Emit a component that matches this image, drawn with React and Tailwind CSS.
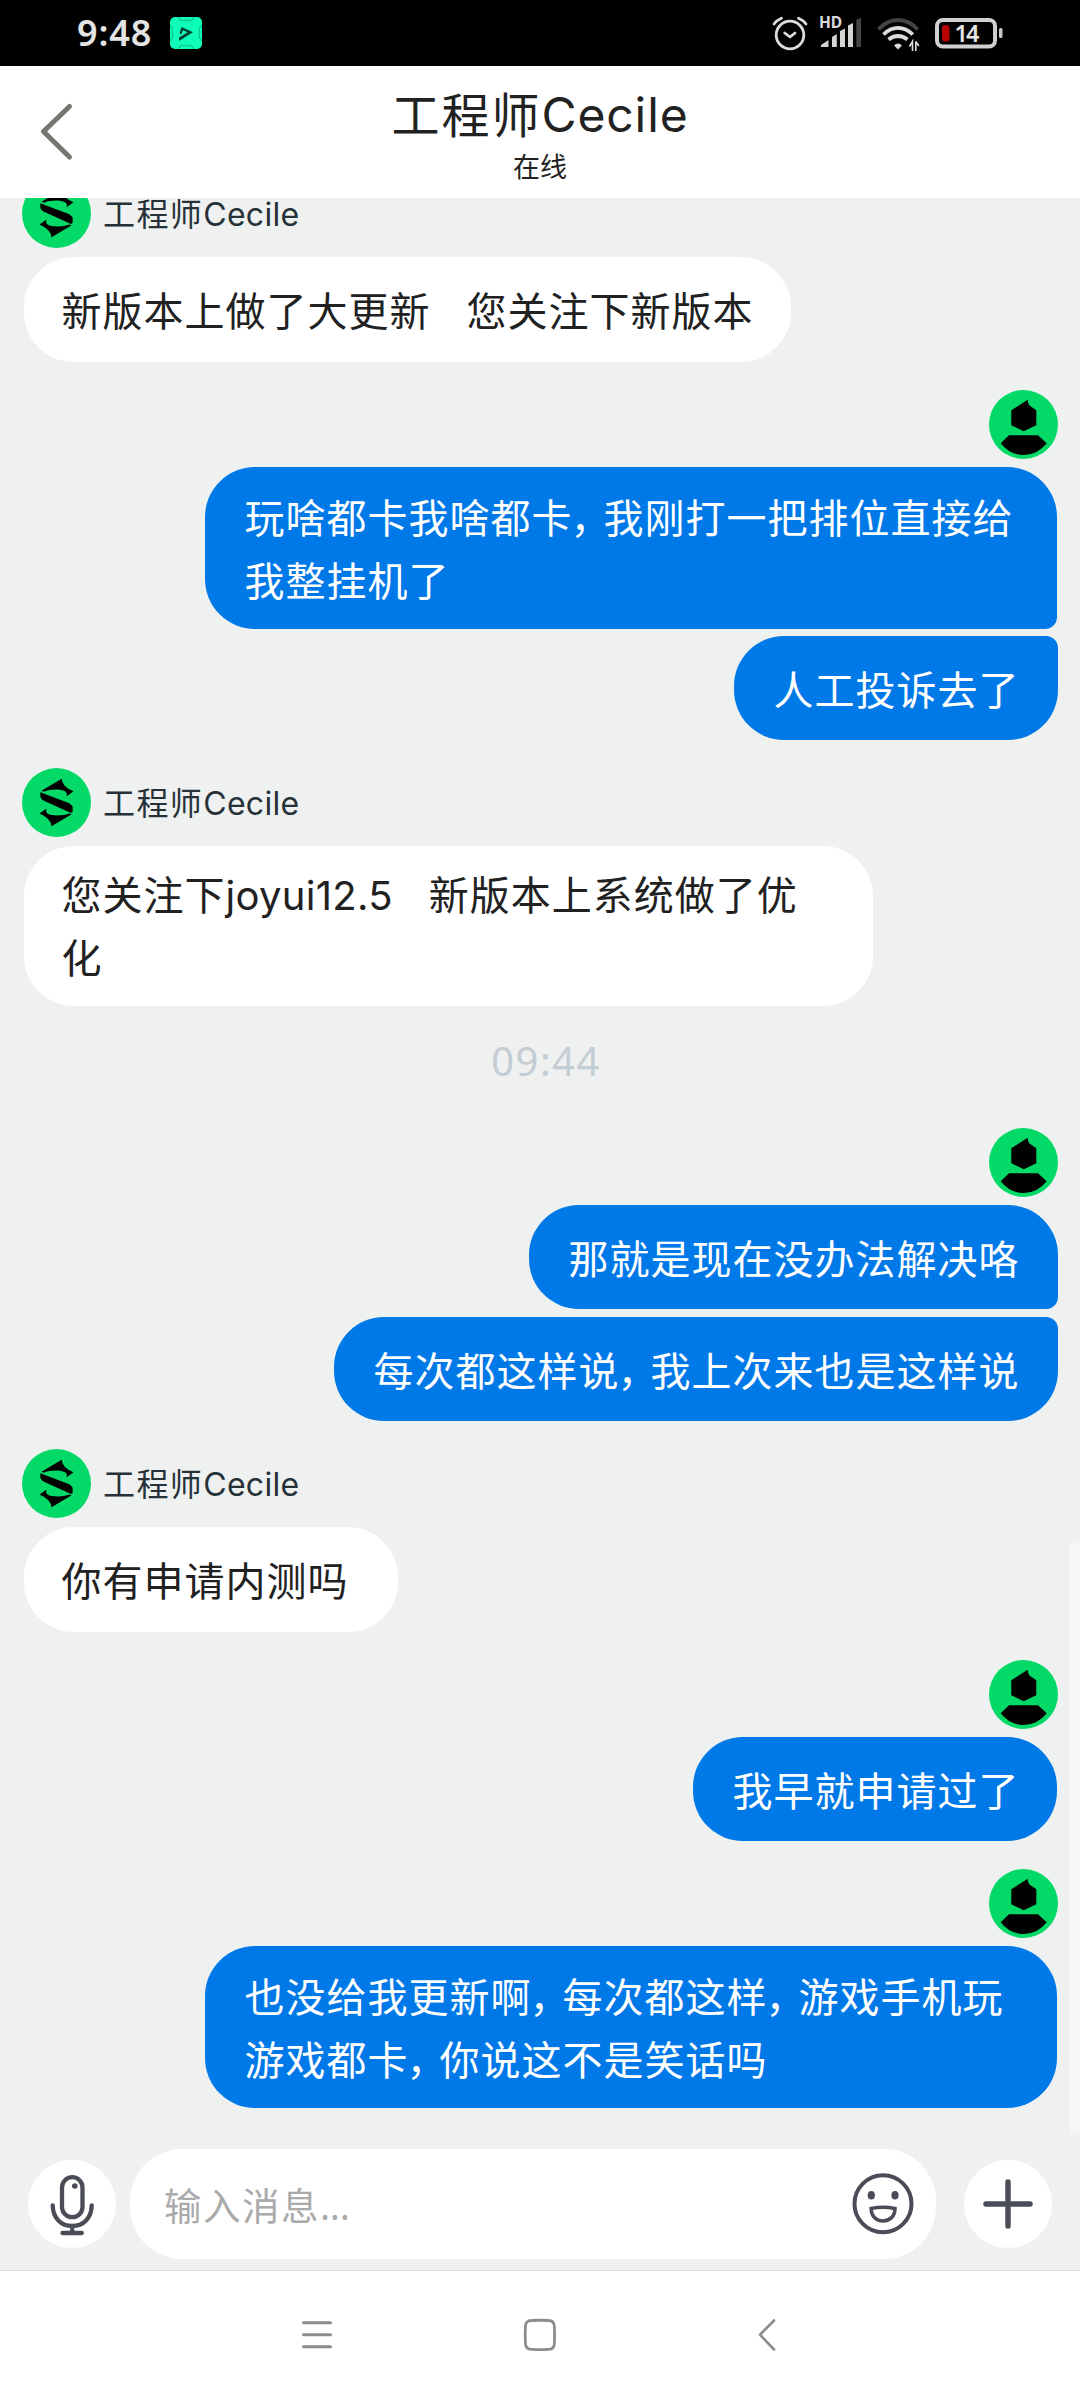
import React from "react";

const messages = [
  {
    from: "agent",
    bubbles: [{ lines: ["新版本上做了大更新   您关注下新版本"], box: "w-[767px] h-[105px] rounded-[50px]" }],
  },
  {
    from: "me",
    bubbles: [
      {
        lines: ["玩啥都卡我啥都卡，我刚打一把排位直接给", "我整挂机了"],
        box: "w-[852px] h-[162px] rounded-[50px] rounded-br-[12px] mr-px",
      },
      { lines: ["人工投诉去了"], box: "w-[324px] h-[104px] rounded-[50px] rounded-tr-[12px] mt-[7px]" },
    ],
  },
  {
    from: "agent",
    bubbles: [
      {
        lines: ["您关注下joyui12.5   新版本上系统做了优", "化"],
        box: "w-[849px] h-[160px] rounded-[50px] pb-0.5",
      },
    ],
  },
  { time: "09:44" },
  {
    from: "me",
    bubbles: [
      { lines: ["那就是现在没办法解决咯"], box: "w-[529px] h-[104px] rounded-[50px] rounded-br-[12px]" },
      {
        lines: ["每次都这样说，我上次来也是这样说"],
        box: "w-[724px] h-[104px] rounded-[50px] rounded-tr-[12px] mt-2",
      },
    ],
  },
  {
    from: "agent",
    bubbles: [{ lines: ["你有申请内测吗"], box: "w-[374px] h-[105px] rounded-[50px]" }],
  },
  {
    from: "me",
    bubbles: [{ lines: ["我早就申请过了"], box: "w-[364px] h-[104px] rounded-[50px] mr-px" }],
  },
  {
    from: "me",
    bubbles: [
      {
        lines: ["也没给我更新啊，每次都这样，游戏手机玩", "游戏都卡，你说这不是笑话吗"],
        box: "w-[852px] h-[162px] rounded-[50px] mr-px",
      },
    ],
  },
];

// Las comas van más estrechas y el texto latino con su propia fuente
function RichText({ text }) {
  return text.split(/(，|[A-Za-z0-9.]+| {3})/).map((part, i) => {
    if (part === "，") {
      return <span key={i} className="-ml-[2px] tracking-[-7px]">，</span>;
    }
    if (part === "   ") {
      return <span key={i} className="inline-block w-[36px]"> </span>;
    }
    if (/^[A-Za-z0-9.]+$/.test(part)) {
      return (
        <span key={i} className="font-['Inter',sans-serif] leading-none tracking-[0.3px]">{part}</span>
      );
    }
    return <span key={i}>{part}</span>;
  });
}

function AgentAvatar() {
  return (
    <svg className="size-[69px] shrink-0" viewBox="0 0 69 69">
      <circle cx="34.5" cy="34.5" r="34.5" fill="#03d967" />
      <path d="M39.7 10.7 19.5 22.7 22 23.7C27 21 39 20.500 43.500 23.500Q45.500 25 44.700 28.200L51.500 23.300Q40 18.500 39.700 10.700Z" />
      <path d="M18.300 24.300 47.300 35.300Q50.700 37.500 50.700 40V43.800L49 45 22 32.800Q18.300 30.800 18.300 28Z" />
      <path d="M29.5 58.3 49.700 46.300 47.200 45.500C42 48 30 48.300 25.500 45.500Q23.500 44 24.300 40.800L17.500 45.500Q29 50.500 29.500 58.300Z" />
    </svg>
  );
}

function UserAvatar() {
  return (
    <svg className="size-[69px] shrink-0" viewBox="0 0 69 69">
      <circle cx="34.5" cy="34.5" r="34.5" fill="#03d967" />
      <path d="M38.7 9.7Q38.500 13 40.500 15.500L47.300 20.300V35.300L34.700 41.300 22.300 35.300V20.300Z" />
      <path d="M20 45.300H49L57.700 53.300Q48.500 65 34.700 65T11.700 53.300Z" />
    </svg>
  );
}

function StatusBar() {
  return (
    <div className="flex h-[66px] shrink-0 items-center bg-black text-[#dcdcdc]">
      <span className="ml-[77px] w-[93px] font-['Noto_Sans',sans-serif] text-[36px] leading-none font-semibold tracking-[0.9px] text-[#e4e4e4]">
        9:48
      </span>
      <svg className="h-8 w-8" viewBox="0 0 32 32">
        <rect width="32" height="32" rx="5" fill="#0fffba" />
        <path d="M8 0 11 3.500H21L24 0M8 32 11 28.500H21L24 32M0 8 2.500 11V21L0 24M32 8 29.500 11V21L32 24" fill="none" stroke="#0bc994" strokeWidth="1.500" />
        <path d="M9.500 17 11.500 10 23 15.200 9 24V20.500L17.500 15.200 13 13.200 11.500 17Z" fill="#06402f" />
      </svg>
      <svg className="ml-auto h-[66px] w-[240px] shrink-0" viewBox="770 0 240 66">
        {/* alarma */}
        <g fill="none" stroke="#dcdcdc" strokeWidth="2.800" strokeLinecap="round">
          <circle cx="790" cy="35" r="13.800" />
          <path d="M784.700 33 790 37 795 33M774 24Q777 20 781.500 18.200M806 24Q803 20 798.500 18.200" strokeLinejoin="round" />
        </g>
        {/* cobertura */}
        <text x="819" y="28" fill="#dcdcdc" fontSize="15.500" fontWeight="700" fontFamily="Noto Sans, sans-serif" textLength="23">HD</text>
        <path d="M821 47V45L828.500 40V47ZM832 47V37L836.800 34V47ZM840 47V31L845 28.500V47ZM848 47V25.500L853 23V47Z" fill="#d4d4d4" />
        <path d="M856.300 47V20L861 17.800V47Z" fill="#444" />
        {/* wifi */}
        <g fill="none" strokeWidth="3.800">
          <path d="M878.500 29.500Q887 20 898 20T917.800 29.500" stroke="#444" />
          <path d="M883.500 34.500Q890 27.900 898 27.900T912.800 34.500M888.500 39.500Q893 36 898 36T907.500 39.500" stroke="#dcdcdc" />
        </g>
        <path d="M894 45.500Q898 41.500 902 45.500L898 49.500Z" fill="#dcdcdc" />
        <path d="M912.500 51V41.500L909.500 46.500M915.800 51V41.500M915.800 41.500 918.800 46" fill="none" stroke="#dcdcdc" strokeWidth="1.600" />
        {/* batería */}
        <rect x="937" y="20" width="58" height="26.500" rx="6" fill="none" stroke="#d0d0d0" strokeWidth="4" />
        <rect x="942" y="25" width="7.500" height="16.500" rx="3" fill="#b90000" />
        <text x="954.500" y="42" fill="#e4e4e4" fontSize="23.500" fontWeight="600" fontFamily="Noto Sans, sans-serif" textLength="25">14</text>
        <rect x="999" y="28" width="3.500" height="10" rx="1.500" fill="#c8c8c8" />
      </svg>
      <div className="w-[70px]" />
    </div>
  );
}

function Header() {
  return (
    <header className="grid h-[132px] shrink-0 grid-cols-[120px_1fr_120px] bg-white text-[#222]">
      <svg className="mt-[34px] ml-[38px] h-16 w-10" viewBox="0 0 40 64" fill="none" stroke="#757571" strokeWidth="5" strokeLinecap="round" strokeLinejoin="round">
        <path d="M31.500 6.500 5.500 31.500 31.500 57" />
      </svg>
      <div className="flex flex-col items-center">
        <h1 className="mt-[15px] flex h-[62px] items-center text-[48px] leading-[62px] tracking-[2px]">
          工程师
          <span className="mt-[5px] font-['Inter',sans-serif] leading-none tracking-[0.9px]">Cecile</span>
        </h1>
        <p className="mt-[7px] text-[27px] leading-8">在线</p>
      </div>
    </header>
  );
}

function MessageGroup({ from, bubbles }) {
  if (from === "agent") {
    return (
      <div className="flex flex-col items-start pl-[22px]">
        <div className="mb-[9px] flex items-center gap-3">
          <AgentAvatar />
          <span className="mb-[3px] text-[32px] leading-[40px] tracking-[1.4px] text-[#263238]">
            工程师
            <span className="font-['Inter',sans-serif] leading-none tracking-[0.3px]">Cecile</span>
          </span>
        </div>
        {bubbles.map((b, i) => (
          <Bubble key={i} {...b} tone="ml-[1.5px] bg-white text-[#212121] pl-[38px]" />
        ))}
      </div>
    );
  }
  return (
    <div className="flex flex-col items-end pr-[22px]">
      <div className="mb-2">
        <UserAvatar />
      </div>
      {bubbles.map((b, i) => (
        <Bubble key={i} {...b} tone="bg-[#0079e8] text-white pl-[39.5px]" />
      ))}
    </div>
  );
}

function Bubble({ lines, box, tone }) {
  return (
    <div className={`flex shrink-0 flex-col justify-center text-[40px] leading-[63px] tracking-[1px] whitespace-pre ${box} ${tone}`}>
      {lines.map((line) => (
        <p key={line} className="h-[63px]">
          <RichText text={line} />
        </p>
      ))}
    </div>
  );
}

function Composer() {
  return (
    <div className="flex h-[122px] shrink-0 items-start border-b border-[#dedede]">
      <button className="mt-[11px] ml-7 flex size-[88px] items-center justify-center rounded-full bg-white">
        <svg className="size-[88px]" viewBox="0 0 88 88" fill="none" stroke="#4a4d58" strokeWidth="4.300" strokeLinecap="round">
          <rect x="34" y="17.200" width="20.500" height="40" rx="10.200" />
          <path d="M24.700 45.500C25 58 33 66 44.200 66S63.500 58 63.700 45.500M44.200 66V72M34.500 73H53.800" />
          <circle cx="46.800" cy="26" r="2.800" fill="#4a4d58" stroke="none" />
        </svg>
      </button>
      <div className="ml-3.5 flex h-[110px] w-[806px] items-center rounded-[52px] bg-white pr-[22px] pl-[34px]">
        <span className="text-[37.500px] leading-[56px] tracking-[1.5px] text-[#aaa]">
          输入消息
          <span className="font-['Noto_Sans',sans-serif] leading-none tracking-[-0.2px]">...</span>
        </span>
        <svg className="ml-auto size-[62px]" viewBox="0 0 62 62" fill="none" stroke="#4a4d58" strokeWidth="4">
          <circle cx="31" cy="30.700" r="28.500" />
          <path d="M19.200 35.500Q31 33 43 35.500C43 43 38 48 31 48S19.200 43 19.200 35.500Z" strokeWidth="3.600" />
          <ellipse cx="19.300" cy="22.200" rx="3.600" ry="4.300" fill="#4a4d58" stroke="none" />
          <ellipse cx="43" cy="22.200" rx="3.600" ry="4.300" fill="#4a4d58" stroke="none" />
        </svg>
      </div>
      <button className="mt-[11px] ml-7 flex size-[88px] items-center justify-center rounded-full bg-white">
        <svg className="size-[88px]" viewBox="0 0 88 88" stroke="#4a4d58" strokeWidth="5.500" strokeLinecap="round">
          <path d="M44 22V66M22 44H66" />
        </svg>
      </button>
    </div>
  );
}

function NavBar() {
  return (
    <nav className="flex h-[129px] shrink-0 items-start bg-white pt-[44px]">
      <svg className="ml-[297px] h-10 w-10" viewBox="0 0 40 40" stroke="#8c8c8c" strokeWidth="3" strokeLinecap="round">
        <path d="M6.500 7.700H33.500M6.500 19.700H33.500M6.500 31.700H33.500" />
      </svg>
      <svg className="ml-[183px] h-10 w-10" viewBox="0 0 40 40" fill="none" stroke="#8c8c8c" strokeWidth="2.800">
        <path d="M5.400 12Q5.400 5.500 11.500 5.500Q20 5 28.500 5.500Q34.400 5.500 34.400 12Q34.800 20 34.400 28Q34.400 34.400 28.500 34.400Q20 35 11.500 34.400Q5.400 34.400 5.400 28Q5 20 5.400 12Z" />
      </svg>
      <svg className="ml-[187px] h-10 w-10" viewBox="0 0 40 40" fill="none" stroke="#8c8c8c" strokeWidth="2.600" strokeLinecap="round" strokeLinejoin="round">
        <path d="M27 5.500 13 19.700 27 34.500" />
      </svg>
    </nav>
  );
}

export default function App() {
  return (
    <div className="flex h-[2400px] w-[1080px] flex-col overflow-hidden bg-[#eff1f1] font-['Noto_Sans_CJK_SC',sans-serif]">
      <StatusBar />
      <Header />
      <main className="relative h-[1951px] shrink-0 overflow-hidden">
        <div className="-mt-[19px] flex flex-col gap-7">
          {messages.map((m, i) =>
            m.time ? (
              <div
                key={i}
                className="h-[66px] pl-3 text-center font-['Noto_Sans',sans-serif] text-[40px] leading-[53px] tracking-[1.5px] text-[#c3cdd4]"
              >
                {m.time}
              </div>
            ) : (
              <MessageGroup key={i} {...m} />
            )
          )}
        </div>
        {/* barra de desplazamiento */}
        <div className="absolute right-0 bottom-[14px] h-[592px] w-[11px] bg-[#f5f6f6]" />
      </main>
      <Composer />
      <NavBar />
    </div>
  );
}
